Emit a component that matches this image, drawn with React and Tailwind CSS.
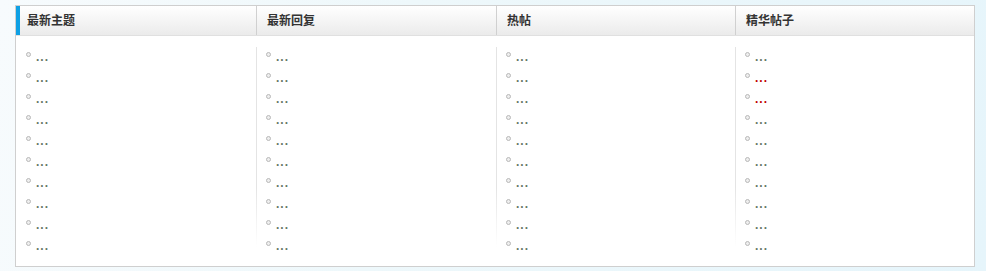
import React from "react";

const cols = [
  { title: "最新主题", red: [] },
  { title: "最新回复", red: [] },
  { title: "热帖", red: [] },
  { title: "精华帖子", red: [1, 2] },
];

function Bullet() {
  return (
    <span className="inline-block w-[5px] h-[5px] rounded-full border border-[#b8b8b8] bg-[#eee] mr-[5px] relative top-[-3px]"></span>
  );
}

export default function App() {
  return (
    <div
      className="w-[986px] h-[271px] bg-[linear-gradient(100deg,#f7fbfd_0%,#eef8fb_40%,#e6f5fb_100%)] pt-[5px] pl-[15px]"
      style={{ fontFamily: '"Liberation Sans", "Noto Sans CJK SC", sans-serif' }}
    >
      <div className="w-[960px] h-[262px] border border-[#cfcfcf] bg-white">
        <div className="grid grid-cols-[240px_240px_239px_239px] h-[30px] bg-[linear-gradient(#ffffff,#ebebeb)] border-b border-[#e0e0e0]">
          {cols.map((c, i) => (
            <div
              key={i}
              className={
                "flex items-center text-[12px] font-bold text-[#333] " +
                (i === 0 ? "border-l-[4px] border-[#0ea0e4] pl-[7px]" : "border-l border-[#d0d0d0] pl-[10px]")
              }
            >
              {c.title}
            </div>
          ))}
        </div>
        <div className="grid grid-cols-[240px_240px_239px_239px] pt-[11px]">
          {cols.map((c, i) => (
            <div
              key={i}
              className={
                "pl-[10px] " +
                (i === 0
                  ? ""
                  : "bg-[linear-gradient(#e4e4e4,#e4e4e4_70%,#ffffff)] bg-no-repeat bg-[length:1px_200px]")
              }
            >
              {Array.from({ length: 10 }).map((_, r) => (
                <div key={r} className="h-[21px] flex items-center text-[12px] leading-[21px]">
                  <Bullet />
                  <span
                    className={
                      c.red.includes(r)
                        ? "text-[#c00000] font-bold tracking-[1px]"
                        : "text-[#667766] font-bold tracking-[1px]"
                    }
                  >
                    ...
                  </span>
                </div>
              ))}
            </div>
          ))}
        </div>
      </div>
    </div>
  );
}
